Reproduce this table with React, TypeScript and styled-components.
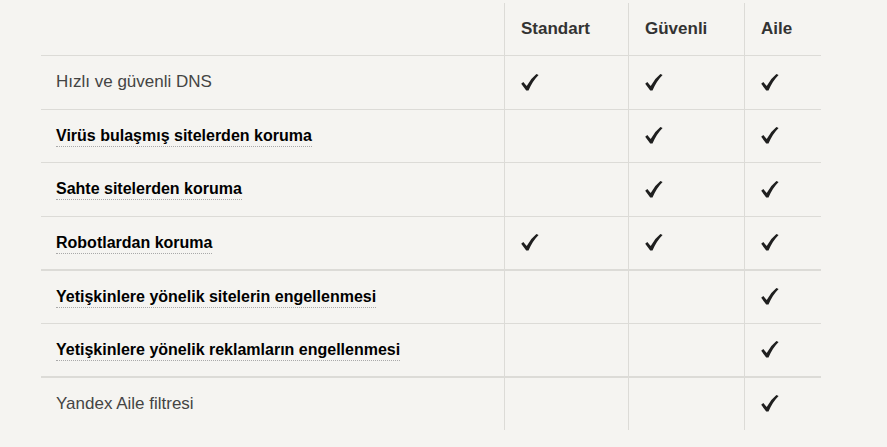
import React from "react";
import styled, { createGlobalStyle } from "styled-components";

const Global = createGlobalStyle`
  html, body { margin: 0; padding: 0; background: #f5f4f1; }
  body { font-family: "Liberation Sans", Arial, sans-serif; }
`;

const Page = styled.div`
  padding: 3px 0 0 41px;
  height: 444px;
  background: #f5f4f1;
`;

const Table = styled.div`
  width: 780px;
  display: flex;
  flex-direction: column;
`;

const Row = styled.div<{ $head?: boolean; $thick?: boolean }>`
  display: grid;
  grid-template-columns: 463px 124px 116px 77px;
  box-sizing: border-box;
  height: ${(p) => (p.$head ? "52px" : "53.5px")};
  border-top: ${(p) => (p.$head ? "none" : p.$thick ? "2px solid #dcdbd7" : "1px solid #dcdbd7")};
`;

const Cell = styled.div<{ $first?: boolean }>`
  display: flex;
  align-items: center;
  box-sizing: border-box;
  padding-left: ${(p) => (p.$first ? "15px" : "16px")};
  border-left: ${(p) => (p.$first ? "none" : "1px solid #dcdbd7")};
`;

const HeadLabel = styled.span`
  font-size: 17px;
  font-weight: bold;
  color: #333;
`;

const Plain = styled.span`
  font-size: 17px;
  color: #444;
`;

const Term = styled.span`
  font-size: 16px;
  font-weight: bold;
  color: #000;
  border-bottom: 1px dotted #a9a9a9;
  line-height: 18px;
  padding-bottom: 1px;
  margin-top: 2px;
`;

const Check = () => (
  <svg width="18" height="17" viewBox="0 0 18 17" aria-hidden="true">
    <path
      d="M0.2 9.8 L2.3 8.1 L5.7 11.9 Q9.2 5 15.4 0 L17.6 1 Q11.5 7 7.5 16.6 L5.2 16.6 Z"
      fill="#1f1f1f"
    />
  </svg>
);

type Feature = { label: string; term: boolean; cols: [boolean, boolean, boolean]; thick?: boolean };

const features: Feature[] = [
  { label: "Hızlı ve güvenli DNS", term: false, cols: [true, true, true] },
  { label: "Virüs bulaşmış sitelerden koruma", term: true, cols: [false, true, true] },
  { label: "Sahte sitelerden koruma", term: true, cols: [false, true, true] },
  { label: "Robotlardan koruma", term: true, cols: [true, true, true] },
  { label: "Yetişkinlere yönelik sitelerin engellenmesi", term: true, cols: [false, false, true], thick: true },
  { label: "Yetişkinlere yönelik reklamların engellenmesi", term: true, cols: [false, false, true] },
  { label: "Yandex Aile filtresi", term: false, cols: [false, false, true], thick: true },
];

export default function App() {
  return (
    <Page>
      <Global />
      <Table>
        <Row $head>
          <Cell $first />
          <Cell><HeadLabel>Standart</HeadLabel></Cell>
          <Cell><HeadLabel>Güvenli</HeadLabel></Cell>
          <Cell><HeadLabel>Aile</HeadLabel></Cell>
        </Row>
        {features.map((f) => (
          <Row key={f.label} $thick={f.thick}>
            <Cell $first>{f.term ? <Term>{f.label}</Term> : <Plain>{f.label}</Plain>}</Cell>
            {f.cols.map((c, i) => (
              <Cell key={i}>{c ? <Check /> : null}</Cell>
            ))}
          </Row>
        ))}
      </Table>
    </Page>
  );
}
